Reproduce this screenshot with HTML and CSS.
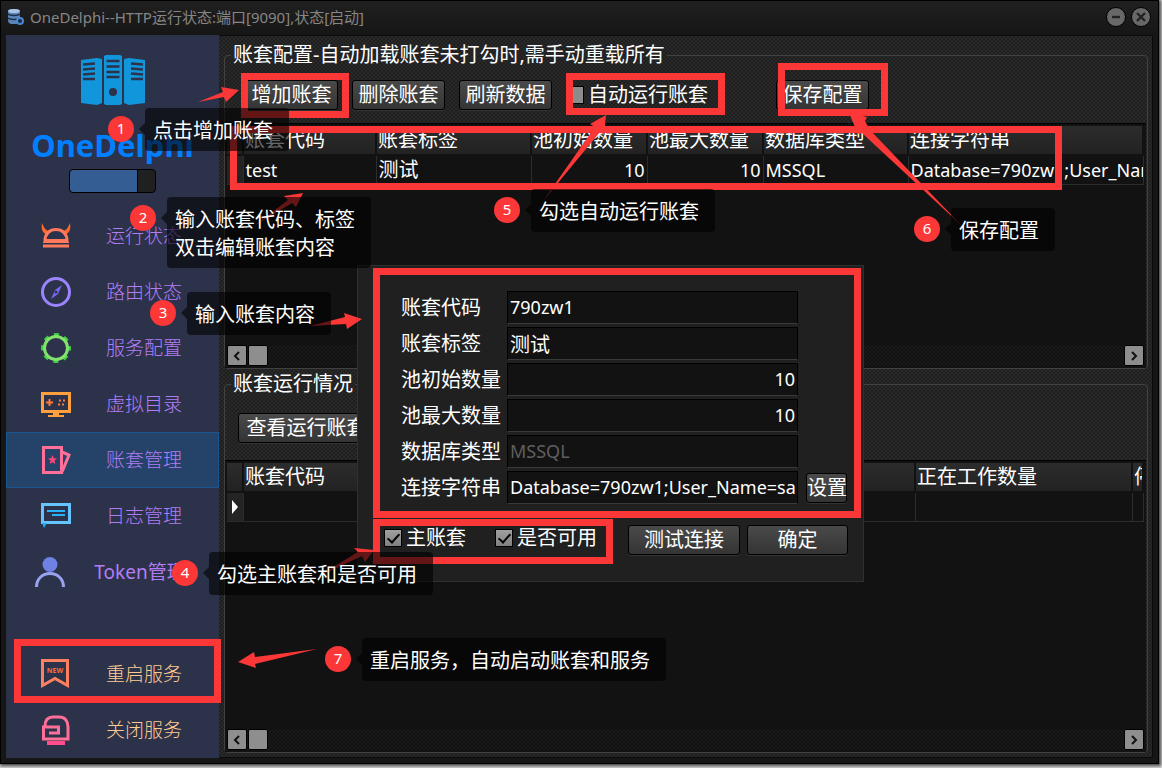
FILE: index.html
```html
<!DOCTYPE html>
<html lang="zh-CN">
<head>
  <meta charset="UTF-8" />
  <meta name="viewport" content="width=device-width, initial-scale=1" />
  <title>OneDelphi</title>
  <link rel="stylesheet" href="styles.css">
</head>
<body>

  <div class="window">

    <!-- Title bar -->
    <header class="titlebar">
      <svg class="app-icon" width="18" height="18" viewBox="0 0 18 18">
        <rect x="1" y="1" width="12" height="15" rx="4" fill="#5b84b8"/>
        <ellipse cx="7" cy="3" rx="6" ry="2" fill="#a9c4e6"/>
        <path d="M1 6c2 2 10 2 12 0M1 10c2 2 10 2 12 0" stroke="#1d2d45" stroke-width="1.4" fill="none"/>
        <circle cx="13" cy="13" r="3" fill="#1b2a40" stroke="#4b88d0" stroke-width="2"/>
      </svg>
      <h1>OneDelphi--HTTP运行状态:端口[9090],状态[启动]</h1>
      <button class="win-btn" aria-label="最小化">
        <svg width="10" height="10" viewBox="0 0 10 10"><path d="M1 5h8" stroke="#222" stroke-width="2.4"/></svg>
      </button>
      <button class="win-btn" aria-label="关闭">
        <svg width="10" height="10" viewBox="0 0 10 10"><path d="M1 1l8 8M9 1l-8 8" stroke="#222" stroke-width="2.4"/></svg>
      </button>
    </header>

    <div class="body">
      <!-- Sidebar -->
      <aside class="sidebar">
        <svg class="logo" width="64" height="50" viewBox="0 0 64 50">
          <path d="M0 5l16-2 5 1v44l-5 2-16-2zM23 1l2-1h14l2 1v48l-2 1H25l-2-1zM43 4l5-1 16 2v43l-16 2-5-2z" fill="#1296db"/>
          <path d="M2 9.500l12-1M2 14.500l12-1M2 19.500l12-1M2 24h12M50 8.500l12 1M50 13.500l12 1M50 18.500l12 1M50 24h12M25.500 6h13M25.500 11.500h13M25.500 17h13M25.500 22h13" stroke="#2d324b" stroke-width="2.4"/>
          <circle cx="32" cy="37" r="4" fill="#2d324b"/>
        </svg>
        <div class="brand">OneDelphi</div>
        <input type="checkbox" class="switch" role="switch" aria-label="服务开关" checked>

        <nav class="menu">
          <a href="#">
            <svg width="30" height="30" viewBox="0 0 30 30" fill="none">
              <path d="M1 2c-1 6 0 10 6 12l2-4c-4 0-6-3-8-8zM29 2c1 6 0 10-6 12l-2-4c4 0 6-3 8-8z" fill="#ff6a2c"/>
              <path d="M4 19.500c0-7 5-11 11-11s11 4 11 11zM2 25h26" stroke="#ff7a5c" stroke-width="3"/>
              <path d="M2 21.500h26" stroke="#ff7a5c"/>
            </svg>
            <span>运行状态</span>
          </a>
          <a href="#">
            <svg width="30" height="30" viewBox="0 0 30 30" fill="none">
              <circle cx="15" cy="15" r="13.500" stroke="#9b85ff" stroke-width="3"/>
              <path d="M21 8l-4 9-7 5 4-9z" fill="#7a68f5"/>
              <circle cx="15" cy="15" r="1.500" fill="#2d324b"/>
            </svg>
            <span>路由状态</span>
          </a>
          <a href="#">
            <svg width="30" height="30" viewBox="0 0 30 30" fill="none">
              <circle cx="15" cy="15" r="13.500" stroke="#3fd047" stroke-width="3" stroke-dasharray="5 5.600" stroke-dashoffset="2.500"/>
              <circle cx="15" cy="15" r="11.500" stroke="#83e26c" stroke-width="3"/>
            </svg>
            <span>服务配置</span>
          </a>
          <a href="#">
            <svg width="30" height="30" viewBox="0 0 30 30" fill="none">
              <path d="M1.500 4.500h27v18h-27z" stroke="#ff9f3d" stroke-width="3"/>
              <path d="M12 24h6v2h5v2H7v-2h5z" fill="#ff9f3d"/>
              <path d="M5 13.500h7M8.500 10v7" stroke="#ff7a3d" stroke-width="2"/>
              <path d="M17 15.500h3M22 11.500h3M18 11.500h3M21 15.500h3" stroke="#ff7a3d" stroke-width="2" stroke-dasharray="2 1"/>
            </svg>
            <span>虚拟目录</span>
          </a>
          <a href="#" class="active">
            <svg width="30" height="30" viewBox="0 0 30 30" fill="none">
              <path d="M2.500 2.500h18v25h-18zM21 7l7 3-7 17" stroke="#ff6f98" stroke-width="3"/>
              <path d="M11.500 10l1.300 3.200 3.200.2-2.500 2.200.8 3.400-2.800-1.800-2.800 1.800.8-3.400L7 13.400l3.200-.2z" fill="#ff4477"/>
            </svg>
            <span>账套管理</span>
          </a>
          <a href="#">
            <svg width="30" height="30" viewBox="0 0 30 30" fill="none">
              <path d="M1.500 3.500h27v18h-27z" stroke="#66c5ff" stroke-width="3"/>
              <path d="M1 22h5l-3 5z" fill="#28a8ee"/>
              <path d="M6 10h18M11 14h13" stroke="#28b4f8" stroke-width="2"/>
            </svg>
            <span>日志管理</span>
          </a>
          <a href="#" class="wide">
            <svg width="30" height="30" viewBox="0 0 30 30" fill="none">
              <circle cx="15" cy="7.500" r="7.500" fill="#6f82e4"/>
              <path d="M1.500 30c0-8 6-13.500 13.500-13.500S28.500 22 28.500 30" stroke="#98a2f0" stroke-width="3"/>
            </svg>
            <span>Token管理</span>
          </a>
        </nav>

        <nav class="menu menu-service">
          <a href="#">
            <svg width="30" height="30" viewBox="0 0 30 30" fill="none">
              <path d="M1.500 1.500h25v25l-12.500-7-12.500 7z" stroke="#ff8061" stroke-width="3"/>
              <text x="14" y="14" class="new-mark">NEW</text>
            </svg>
            <span>重启服务</span>
          </a>
          <a href="#">
            <svg width="30" height="30" viewBox="0 0 30 30" fill="none">
              <path d="M4 11c0-6 3-9 8-9h6c6 0 9 4 9 10v12H2.500V12h15v6H8" stroke="#ff6f98" stroke-width="3"/>
              <path d="M6 28h18" stroke="#ff4d8d" stroke-width="4"/>
            </svg>
            <span>关闭服务</span>
          </a>
        </nav>
      </aside>

      <!-- Main area -->
      <main class="main">
        <fieldset class="panel panel-config">
          <legend>账套配置-自动加载账套未打勾时,需手动重载所有</legend>
          <div class="toolbar">
            <button class="btn">增加账套</button>
            <button class="btn">删除账套</button>
            <button class="btn">刷新数据</button>
            <label class="check"><input type="checkbox">自动运行账套</label>
            <button class="btn btn-save">保存配置</button>
          </div>
          <div class="grid-box">
            <table class="grid">
              <colgroup>
                <col class="c-mark"><col class="c-code"><col class="c-tag"><col class="c-num"><col class="c-num"><col class="c-type"><col>
              </colgroup>
              <thead>
                <tr><th></th><th>账套代码</th><th>账套标签</th><th>池初始数量</th><th>池最大数量</th><th>数据库类型</th><th>连接字符串</th></tr>
              </thead>
              <tbody>
                <tr><td class="mark"></td><td class="latin">test</td><td>测试</td><td class="latin num">10</td><td class="latin num">10</td><td class="latin">MSSQL</td><td class="latin">Database=790zw1;User_Name=sa</td></tr>
              </tbody>
            </table>
            <div class="scrollbar">
              <button aria-label="向左滚动"><svg width="8" height="10" viewBox="0 0 8 10"><path d="M6 1L2 5l4 4"/></svg></button>
              <span class="thumb"></span>
              <button class="right" aria-label="向右滚动"><svg width="8" height="10" viewBox="0 0 8 10"><path d="M2 1l4 4-4 4"/></svg></button>
            </div>
          </div>
        </fieldset>

        <fieldset class="panel panel-running">
          <legend>账套运行情况</legend>
          <div class="toolbar">
            <button class="btn">查看运行账套</button>
          </div>
          <div class="grid-box">
            <table class="grid">
              <colgroup>
                <col class="c-mark"><col><col class="c-work"><col class="c-last">
              </colgroup>
              <thead>
                <tr><th></th><th>账套代码</th><th>正在工作数量</th><th>停</th></tr>
              </thead>
              <tbody>
                <tr><td class="mark"><svg width="8" height="14" viewBox="0 0 8 14"><path d="M1 0l6 7-6 7z" fill="#fff"/></svg></td><td></td><td></td><td></td></tr>
              </tbody>
            </table>
            <div class="scrollbar">
              <button aria-label="向左滚动"><svg width="8" height="10" viewBox="0 0 8 10"><path d="M6 1L2 5l4 4"/></svg></button>
              <span class="thumb"></span>
              <button class="right" aria-label="向右滚动"><svg width="8" height="10" viewBox="0 0 8 10"><path d="M2 1l4 4-4 4"/></svg></button>
            </div>
          </div>
        </fieldset>
      </main>
    </div>
  </div>

  <!-- Account dialog -->
  <form class="dialog" action="#">
    <div class="fields">
      <label for="code">账套代码</label>
      <input type="text" id="code" value="790zw1">
      <label for="tag">账套标签</label>
      <input type="text" id="tag" class="cjk" value="测试">
      <label for="pool-init">池初始数量</label>
      <input type="text" id="pool-init" class="num" value="10">
      <label for="pool-max">池最大数量</label>
      <input type="text" id="pool-max" class="num" value="10">
      <label for="db-type">数据库类型</label>
      <input type="text" id="db-type" value="MSSQL" disabled>
      <label for="conn">连接字符串</label>
      <input type="text" id="conn" value="Database=790zw1;User_Name=sa">
      <button type="button" class="btn btn-set">设置</button>
    </div>
    <div class="actions">
      <label class="check"><input type="checkbox" checked>主账套</label>
      <label class="check"><input type="checkbox" checked>是否可用</label>
      <button type="button" class="btn btn-test">测试连接</button>
      <button type="button" class="btn btn-ok">确定</button>
    </div>
  </form>

  <!-- Guide marks over the window -->
  <div class="guide">
    <div class="frame frame-add"></div>
    <div class="frame frame-auto"></div>
    <div class="frame frame-save"></div>
    <div class="frame frame-rows"></div>
    <div class="frame frame-fields"></div>
    <div class="frame frame-checks"></div>
    <div class="frame frame-restart"></div>

    <svg class="arrows" width="1162" height="768" viewBox="0 0 1162 768" fill="#fb3737">
      <path d="M198 102l25-10-2-5 18 3-13 12-2-5z"/>
      <path d="M254 226l34-26-4-4 19-3-7 14-4-4z"/>
      <path d="M310 326l35-9-1-4 18 6-15 10-1-5z"/>
      <path d="M315 578l43-26-4-4 20 2-9 12-3-6z"/>
      <path d="M543 201l52-74-5-3 16-9-2 20-4-3z"/>
      <path d="M962 226l-100-93-4 1-9-21 18 4-2 4 5 9z"/>
      <path d="M317 649l-62 8-1-5-16 10 18 6-1-4z"/>
    </svg>

    <div class="note note-1"><b>1</b><p>点击增加账套</p></div>
    <div class="note note-2"><b>2</b><p>输入账套代码、标签<br>双击编辑账套内容</p></div>
    <div class="note note-3"><b>3</b><p>输入账套内容</p></div>
    <div class="note note-4"><b>4</b><p>勾选主账套和是否可用</p></div>
    <div class="note note-5"><b>5</b><p>勾选自动运行账套</p></div>
    <div class="note note-6"><b>6</b><p>保存配置</p></div>
    <div class="note note-7"><b>7</b><p>重启服务，自动启动账套和服务</p></div>
  </div>

</body>
</html>
```
FILE: styles.css
```css
/* Basic reset */
* {
  box-sizing: border-box;
}
body {
  margin: 0;
  min-height: 100vh;
  display: flex;
  position: relative;
  padding: 0 3px 4px 0;
  background: #d8d8d8;
  color: #fff;
  font-family: "Noto Sans", "Noto Sans CJK SC", sans-serif;
  font-size: 20px;
  line-height: 28px;
}
button, input {
  font-family: inherit;
  color: inherit;
}

/* Window */
.window {
  flex: 1;
  min-width: 0;
  display: flex;
  flex-direction: column;
  padding: 0 5px 5px;
  background: #161616;
  border: 1px solid #000;
  box-shadow: 1px 1px 3px 1px #444;
}
.titlebar {
  display: flex;
  align-items: center;
  height: 34px;
  gap: 5px;
  margin: 0 -5px;
  padding: 0 7px 2px 6px;
  background: linear-gradient(#202020, #161616);
}
.titlebar h1 {
  flex: 1;
  margin: 0;
  font-size: 15px;
  font-weight: normal;
  color: #868686;
}
.win-btn {
  display: flex;
  align-items: center;
  justify-content: center;
  width: 20px;
  height: 20px;
  padding: 0;
  border: 1px solid #000;
  border-radius: 50%;
  background: #686868;
}
.body {
  flex: 1;
  display: flex;
  min-width: 0;
}

/* Sidebar */
.sidebar {
  flex: 0 0 213px;
  display: flex;
  flex-direction: column;
  align-items: center;
  padding-top: 20px;
  background: #2d324b;
}
.logo {
  flex: none;
}
.brand {
  margin-top: 20px;
  font-size: 31px;
  font-weight: bold;
  line-height: 40px;
  color: #007fff;
}
.switch {
  appearance: none;
  width: 87px;
  height: 24px;
  margin: 4px 0 0;
  border: 1px solid #000;
  border-radius: 4px;
  background: linear-gradient(90deg, #345d94 67px, #000 67px, #000 68px, #202020 68px);
}
.menu {
  width: 100%;
  margin-top: 15px;
}
.menu-service {
  margin-top: auto;
}
.menu a {
  display: flex;
  align-items: center;
  justify-content: center;
  gap: 35px;
  height: 56px;
  padding-right: 2px;
  border: 1px solid transparent;
  font-size: 19px;
  font-weight: 300;
  color: #b17df7;
  text-decoration: none;
}
.menu a.wide {
  gap: 29px;
  padding-right: 4px;
  font-weight: normal;
}
.menu a.active {
  background: #254269;
  border-color: #1d5590;
}
.menu-service a {
  color: #ffcb91;
}
.new-mark {
  font-size: 7px;
  font-weight: bold;
  fill: #ff6b35;
  text-anchor: middle;
}

/* Main area */
.main {
  flex: 1;
  min-width: 0;
  display: flex;
  flex-direction: column;
  padding: 5px 4px 4px 5px;
  background: repeating-conic-gradient(#1f1f1f 0 25%, #292929 0 50%) 0 0 / 4px 4px;
  border: 1px solid #0a0a0a;
  border-left-width: 0;
}
.panel {
  display: flex;
  flex-direction: column;
  min-width: 0;
  margin: 0;
  padding: 0 1px 0 0;
  border: 1px solid #414141;
  border-radius: 4px;
}
.panel legend {
  margin-left: 6px;
  padding: 0 2px;
}
.panel-config {
  flex: 0 0 328px;
}
.panel-running {
  flex: 1;
  margin-top: 1px;
}
.toolbar {
  display: flex;
  align-items: center;
  gap: 14px;
  padding: 11px 20px 13px;
}
.panel-running .toolbar {
  padding: 15px 13px 17px;
}
.btn {
  min-width: 93px;
  height: 30px;
  padding: 0 5px;
  font-size: 20px;
  line-height: 26px;
  border: 1px solid #000;
  border-radius: 3px;
  background: linear-gradient(#4a4a4a, #343434);
  box-shadow: 0 1px 0 #333;
  white-space: nowrap;
}
.btn-save {
  margin-left: 54px;
}
.panel-running .btn {
  width: 137px;
}
.check {
  display: flex;
  align-items: center;
  gap: 4px;
  white-space: nowrap;
}
.check input {
  appearance: none;
  width: 18px;
  height: 18px;
  margin: 0;
  border: 1px solid #000;
  background: #8c8c8c;
}
.check input:checked {
  background: linear-gradient(#a0a0a0, #808080);
}
.check input:checked::after {
  content: "";
  display: block;
  width: 5px;
  height: 10px;
  margin: 1px 0 0 5px;
  border: solid #000;
  border-width: 0 2px 2px 0;
  transform: rotate(42deg);
}

/* Data grids */
.grid-box {
  flex: 1;
  display: flex;
  flex-direction: column;
  padding: 2px;
  border-top: 1px solid #000;
  background: #121212;
}
.grid {
  width: 100%;
  table-layout: fixed;
  border-collapse: collapse;
}
.c-mark { width: 16px; }
.c-code { width: 133px; }
.c-tag { width: 155px; }
.c-num { width: 116px; }
.c-type { width: 145px; }
.c-work { width: 217px; }
.c-last { width: 11px; }
.grid th,
.grid td {
  height: 29px;
  padding: 0 1px;
  overflow: hidden;
  white-space: nowrap;
  text-align: left;
  font-weight: normal;
  border-right: 1px solid #2c2c2c;
}
.grid th {
  background: linear-gradient(#2c2c2c, #222);
  border-right: 2px solid #121212;
  border-bottom: 2px solid #121212;
}
.grid td {
  padding: 0 2px;
  border-bottom: 1px solid #2c2c2c;
}
.grid td.mark {
  padding: 0;
  text-align: center;
  background: #242424;
}
.grid .latin {
  font-size: 18px;
}
.grid .num {
  text-align: right;
}
.scrollbar {
  display: flex;
  gap: 1px;
  margin-top: auto;
  background: repeating-conic-gradient(#121212 0 25%, #181818 0 50%) 0 0 / 4px 4px;
}
.scrollbar button,
.scrollbar .thumb {
  display: flex;
  align-items: center;
  justify-content: center;
  width: 20px;
  height: 21px;
  padding: 0;
  border: 1px solid #000;
  border-radius: 2px;
  background: #8e8e8e;
}
.scrollbar .right {
  margin-left: auto;
}
.scrollbar path {
  fill: none;
  stroke: #111;
  stroke-width: 2;
}

/* Dialog over the window */
.dialog {
  position: absolute;
  left: 357px;
  top: 265px;
  width: 507px;
  padding: 25px 15px 25px 26px;
  background: #202020;
  border: 1px solid #303030;
}
.fields {
  display: grid;
  grid-template-columns: 106px 291px 41px;
  grid-auto-rows: 33px;
  row-gap: 3px;
  align-items: center;
  padding-left: 17px;
}
.fields label {
  grid-column: 1;
}
.fields input {
  width: 100%;
  height: 33px;
  padding: 0 2px 1px;
  font-size: 18px;
  background: #121212;
  border: 1px solid #000;
  border-bottom-color: #3a3a3a;
}
.fields input.cjk {
  font-size: 20px;
}
.fields input.num {
  text-align: right;
}
.fields input:disabled {
  color: #5f5f5f;
}
.btn-set {
  width: 41px;
  min-width: 0;
  padding: 0;
  margin-left: 8px;
}
.actions {
  display: flex;
  align-items: center;
  margin-top: 20px;
}
.actions .check {
  width: 111px;
  padding-bottom: 4px;
}
.actions .btn-test {
  width: 112px;
  margin-left: 22px;
}
.actions .btn-ok {
  width: 101px;
  margin-left: 7px;
}

/* Guide marks */
.guide {
  position: absolute;
  inset: 0;
  overflow: hidden;
  pointer-events: none;
}
.frame {
  position: absolute;
  border: 7px solid #fb3737;
}
.frame-add { left: 241px; top: 73px; width: 108px; height: 45px; }
.frame-auto { left: 566px; top: 73px; width: 159px; height: 42px; }
.frame-save { left: 778px; top: 63px; width: 110px; height: 53px; }
.frame-rows { left: 230px; top: 126px; width: 832px; height: 64px; }
.frame-fields { left: 373px; top: 268px; width: 488px; height: 250px; }
.frame-checks { left: 373px; top: 519px; width: 240px; height: 45px; }
.frame-restart { left: 14px; top: 639px; width: 207px; height: 64px; }
.arrows {
  position: absolute;
  left: 0;
  top: 0;
}
.note {
  position: absolute;
  display: flex;
  align-items: flex-start;
}
.note b {
  width: 26px;
  height: 26px;
  margin: 8px 5px 0 0;
  border-radius: 50%;
  background: #fb3737;
  font-size: 15px;
  font-weight: normal;
  line-height: 24px;
  text-align: center;
}
.note::before {
  content: "";
  order: 1;
  margin-top: 15px;
  border: 6px solid transparent;
  border-left: 0;
  border-right-color: rgba(0, 0, 0, 0.6);
}
.note p {
  order: 2;
  margin: 0;
  padding: 9px 16px 6px 8px;
  border-radius: 4px;
  background: rgba(0, 0, 0, 0.6);
  white-space: nowrap;
}
.note-1 { left: 108px; top: 108px; }
.note-2 { left: 130px; top: 197px; }
.note-3 { left: 150px; top: 292px; }
.note-4 { left: 172px; top: 552px; }
.note-5 { left: 494px; top: 189px; }
.note-6 { left: 914px; top: 208px; }
.note-7 { left: 325px; top: 638px; }
```
